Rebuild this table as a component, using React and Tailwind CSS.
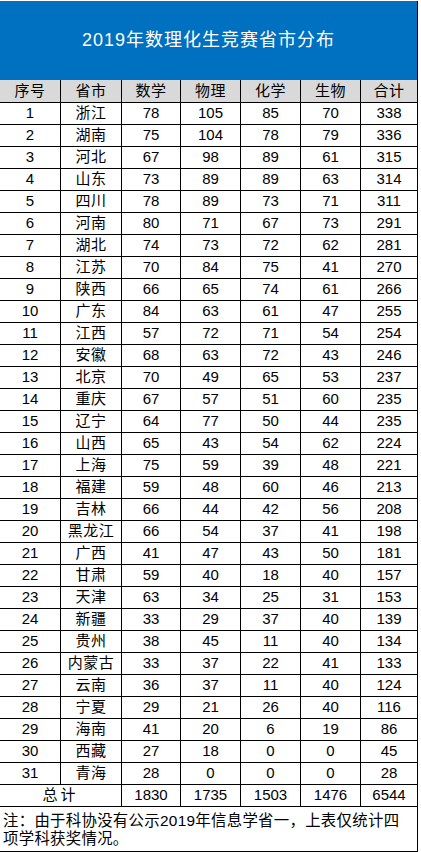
import React from 'react';

const rows = [
  [1, '浙江', 78, 105, 85, 70, 338],
  [2, '湖南', 75, 104, 78, 79, 336],
  [3, '河北', 67, 98, 89, 61, 315],
  [4, '山东', 73, 89, 89, 63, 314],
  [5, '四川', 78, 89, 73, 71, 311],
  [6, '河南', 80, 71, 67, 73, 291],
  [7, '湖北', 74, 73, 72, 62, 281],
  [8, '江苏', 70, 84, 75, 41, 270],
  [9, '陕西', 66, 65, 74, 61, 266],
  [10, '广东', 84, 63, 61, 47, 255],
  [11, '江西', 57, 72, 71, 54, 254],
  [12, '安徽', 68, 63, 72, 43, 246],
  [13, '北京', 70, 49, 65, 53, 237],
  [14, '重庆', 67, 57, 51, 60, 235],
  [15, '辽宁', 64, 77, 50, 44, 235],
  [16, '山西', 65, 43, 54, 62, 224],
  [17, '上海', 75, 59, 39, 48, 221],
  [18, '福建', 59, 48, 60, 46, 213],
  [19, '吉林', 66, 44, 42, 56, 208],
  [20, '黑龙江', 66, 54, 37, 41, 198],
  [21, '广西', 41, 47, 43, 50, 181],
  [22, '甘肃', 59, 40, 18, 40, 157],
  [23, '天津', 63, 34, 25, 31, 153],
  [24, '新疆', 33, 29, 37, 40, 139],
  [25, '贵州', 38, 45, 11, 40, 134],
  [26, '内蒙古', 33, 37, 22, 41, 133],
  [27, '云南', 36, 37, 11, 40, 124],
  [28, '宁夏', 29, 21, 26, 40, 116],
  [29, '海南', 41, 20, 6, 19, 86],
  [30, '西藏', 27, 18, 0, 0, 45],
  [31, '青海', 28, 0, 0, 0, 28],
];

const headers = ['序号', '省市', '数学', '物理', '化学', '生物', '合计'];

// column widths incl. right border line
const widths = ['w-[61px]', 'w-[61px]', 'w-[59px]', 'w-[60px]', 'w-[60px]', 'w-[60px]', 'w-[57px]'];

const Cell = ({ w, children }) => (
  <div className={`${w} shrink-0 h-full flex items-center justify-center border-r border-black`}>
    {children}
  </div>
);

export default function App() {
  return (
    <div
      className="w-[421px] bg-white text-black pt-[1px]"
      style={{ fontFamily: '"Liberation Sans", "Noto Sans CJK SC", sans-serif' }}
    >
      <div className="w-[418px] border-r border-black">
        {/* Title */}
        <div className="h-[79px] bg-[#0070c0] flex items-center justify-center text-white text-[18px] tracking-[1px]">
          2019年数理化生竞赛省市分布
        </div>

        {/* Header */}
        <div className="flex h-[23px] bg-[#d9d9d9] border-b border-black text-[15px] tracking-[0.5px]">
          {headers.map((h, i) => (
            <Cell key={h} w={widths[i]}>{h}</Cell>
          ))}
        </div>

        {/* Data */}
        {rows.map((r) => (
          <div key={r[0]} className="flex h-[22px] border-b border-black text-[15px]">
            {r.map((v, i) => (
              <Cell key={i} w={widths[i]}>
                {i === 1 ? <span className="tracking-[0.5px]">{v}</span> : v}
              </Cell>
            ))}
          </div>
        ))}

        {/* Total */}
        <div className="flex h-[22px] border-b border-black text-[15px]">
          <Cell w="w-[122px]"><span className="tracking-[3px]">总计</span></Cell>
          <Cell w={widths[2]}>1830</Cell>
          <Cell w={widths[3]}>1735</Cell>
          <Cell w={widths[4]}>1503</Cell>
          <Cell w={widths[5]}>1476</Cell>
          <Cell w={widths[6]}>6544</Cell>
        </div>

        {/* Note */}
        <div className="h-[45px] border-b border-black pl-[3px] pt-[5px] text-[15.4px] leading-[18px] tracking-[0.3px] whitespace-nowrap">
          注：由于科协没有公示2019年信息学省一，上表仅统计四
          <br />
          项学科获奖情况。
        </div>
      </div>
    </div>
  );
}
